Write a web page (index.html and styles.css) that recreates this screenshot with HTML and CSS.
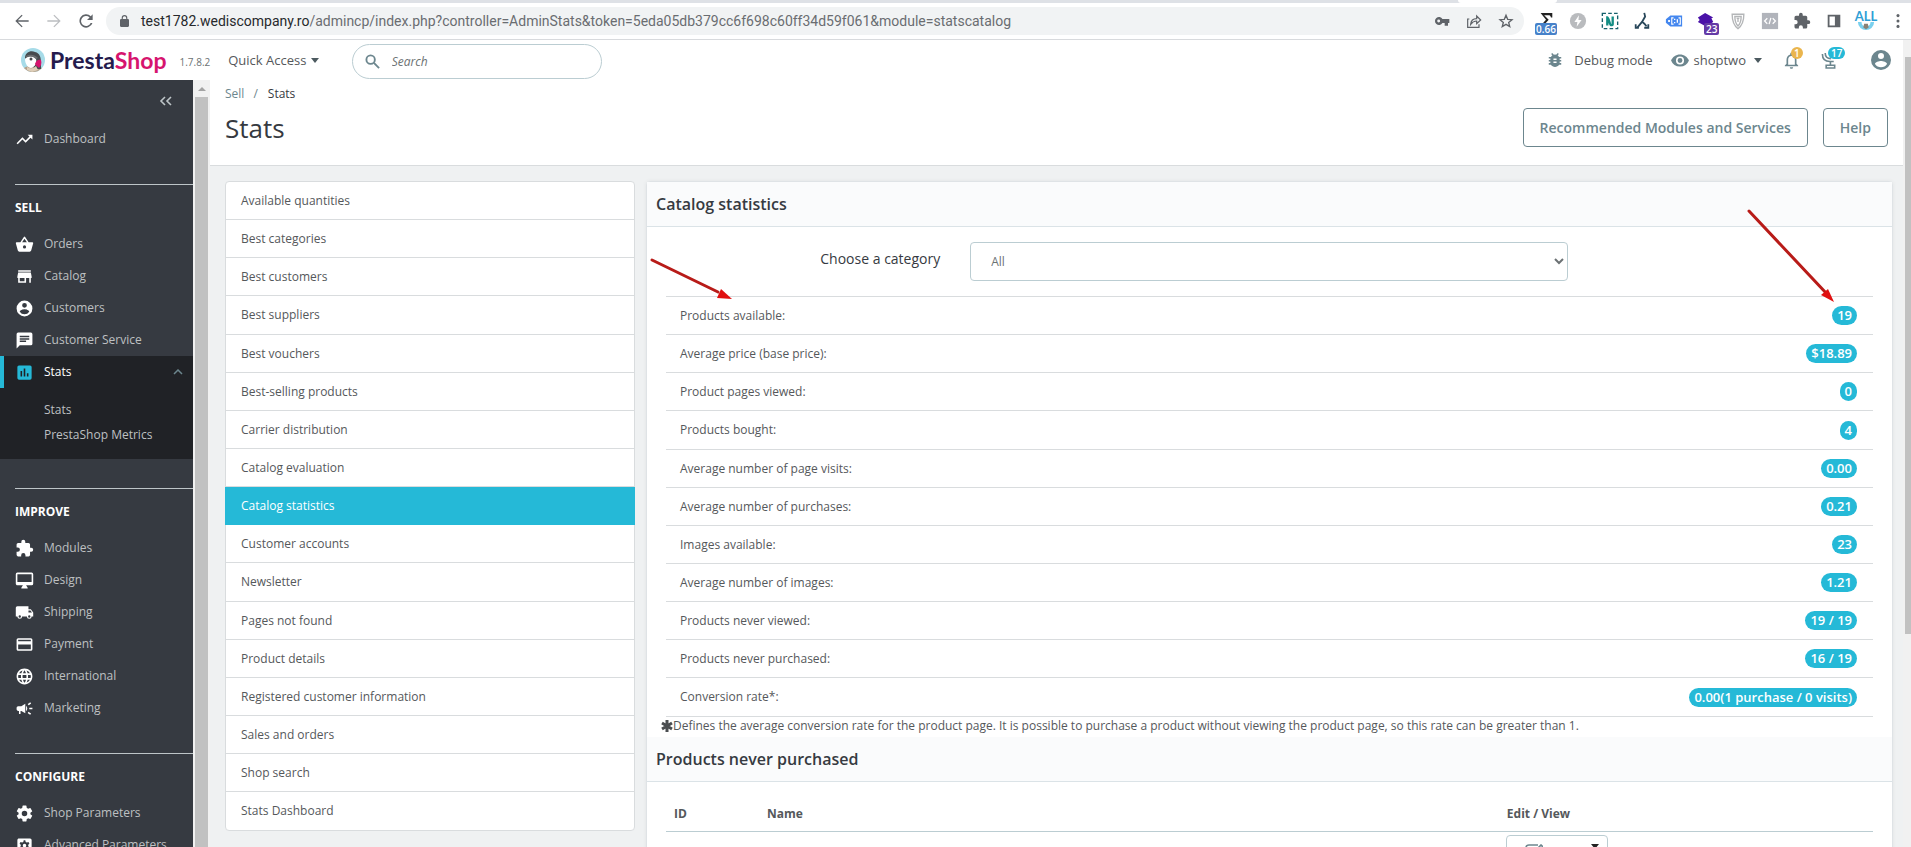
FILE: index.html
```html
<!DOCTYPE html>
<html lang="en">
<head>
<meta charset="utf-8">
<title>Stats • PrestaShop</title>
<link rel="stylesheet" href="styles.css">
</head>
<body>
<div class="tabstrip"><span class="tabstrip-active"></span></div>
<div class="toolbar">
  <nav class="nav-buttons">
    <button aria-label="Back"><svg viewBox="0 0 24 24"><path fill="#5f6368" d="M22 11H5.8l7.1-7.1L11.500 2.500 2 12l9.500 9.500 1.400-1.400L5.800 13H22z"/></svg></button>
    <button aria-label="Forward"><svg viewBox="0 0 24 24"><path fill="#bcbec1" d="M2 11h16.200l-7.100-7.100 1.400-1.400L22 12l-9.500 9.500-1.400-1.400 7.100-7.100H2z"/></svg></button>
    <button aria-label="Reload"><svg viewBox="0 0 24 24"><path fill="#5f6368" d="M19.200 4.800A10 10 0 1 0 21.700 15h-2.700a7.500 7.500 0 1 1-1.600-8.300L13.500 10.500H22V2z"/></svg></button>
  </nav>
  <div class="address">
    <svg class="lock" viewBox="4 1 16 21"><path fill="#5f6368" d="M18 8h-1V6A5 5 0 0 0 7 6v2H6a2 2 0 0 0-2 2v10c0 1.100.9 2 2 2h12a2 2 0 0 0 2-2V10a2 2 0 0 0-2-2zM9 6a3 3 0 0 1 6 0v2H9z"/></svg>
    <span class="url"><b>test1782.wediscompany.ro</b>/admincp/index.php?controller=AdminStats&amp;token=5eda05db379cc6f698c60ff34d59f061&amp;module=statscatalog</span>
    <div class="address-actions">
      <svg viewBox="0 0 24 24"><path fill="#5f6368" d="M12.650 9A6 6 0 1 0 12.650 15H16v4h5v-4h2V9zM7 14.200a2.200 2.200 0 1 1 0-4.400 2.200 2.200 0 0 1 0 4.400z"/></svg>
      <svg viewBox="0 0 24 24" fill="none" stroke="#5f6368" stroke-width="1.800"><path d="M5 9H2.500v12.500h17V17M7 17c.5-5.500 3.500-8.500 9-8.500V4.500l6 6-6 5.500v-4c-4 0-6.500 1.500-9 5z"/></svg>
      <svg viewBox="0 0 24 24" fill="none" stroke="#5f6368" stroke-width="2"><path d="M12 3.500l2.500 6 6.500.5-5 4.200 1.600 6.300-5.600-3.400-5.600 3.400L8 14.200 3 10l6.500-.5z"/></svg>
    </div>
  </div>
  <div class="extensions">
    <span class="ext"><svg viewBox="0 0 20 20"><path fill="#222" d="M4 1h13v5h-1.500C15 4 14.500 3.500 12.500 3.500H8l5 5L9 13H6l4-4.500z"/></svg><i class="ext-badge blue">0.66</i></span>
    <span class="ext"><svg viewBox="0 0 20 20"><circle cx="10" cy="10" r="9" fill="#b9bbbe"/><path fill="#fff" d="M11 3.500L6 11h3.300L8.500 16.500 14 9h-3.500z"/></svg></span>
    <span class="ext"><svg viewBox="0 0 20 20" fill="none"><path d="M1.500 1.500h17v17h-17z" stroke="#15606c" stroke-width="1.500" stroke-dasharray="4 2.500"/><path d="M7 15V6c1.500 0 2.500 8 4 8.500 1.200.4 2 0 2-1V5" stroke="#138d84" stroke-width="2.600"/></svg></span>
    <span class="ext"><svg viewBox="0 0 20 20" fill="none" stroke="#28475a" stroke-width="2"><path d="M12.500 1l1 4-3.500 6-5 6M10 10.500c1.500 2 3 2 5 5.500" /><path d="M3 13.500v4h3.500M12.500 17.500H17v-4" /></svg></span>
    <span class="ext"><svg viewBox="0 0 20 20"><path fill="#4487ef" d="M6 4h13v12H6L1 12V8z"/><path fill="none" stroke="#fff" stroke-width="1.200" d="M9.500 6.500h-2v7h2M15 6.500h2v7h-2"/><path fill="#fff" d="M3.500 9h2v2h-2zM10 7.500h1.500V9H10zM10 11h1.500v1.500H10zM13 8v4h1.500V8z"/></svg></span>
    <span class="ext"><svg viewBox="0 0 20 20"><path fill="#4a12a8" d="M9 1l9 5-2 1 2 4-8 5-9-5 2-2-2-3z"/></svg><i class="ext-badge violet">23</i></span>
    <span class="ext"><svg viewBox="0 0 20 20" fill="none" stroke="#b4b6b8" stroke-width="1.500"><path d="M3.500 2.500h13c0 7-1 12-6.500 16-5.500-4-6.500-9-6.500-16z"/><path d="M6.500 5h7c0 5-.5 7.500-3.500 10.500C7 12.500 6.500 10 6.500 5zM8.500 7h3M10 7v4"/></svg></span>
    <span class="ext"><svg viewBox="0 0 20 20"><path fill="#b1b4bb" d="M1 1h18v18H1z"/><path fill="none" stroke="#fff" stroke-width="1.400" d="M7 7l-3 3 3 3M13 7l3 3-3 3M11 6.500l-2 7"/></svg></span>
    <span class="ext"><svg viewBox="0 0 24 24"><use href="#i-puzzle" fill="#5f6368"/></svg></span>
    <span class="ext"><svg viewBox="0 0 20 20"><path fill="#5f6368" d="M3 3h14v14H3zm2 2v10h6V5z" fill-rule="evenodd"/></svg></span>
    <span class="ext profile"><svg viewBox="0 0 20 20"><path fill="none" stroke="#7ad0ee" stroke-width="4" d="M3 10c0 9 14 9 14 0"/><path fill="#8a8175" d="M8 12h4l1 4-3 2-3-2z"/></svg><i>ALL</i></span>
    <span class="ext"><svg viewBox="0 0 20 20" fill="#5f6368"><circle cx="10" cy="4" r="1.700"/><circle cx="10" cy="10" r="1.700"/><circle cx="10" cy="16" r="1.700"/></svg></span>
  </div>
</div>

<svg class="sprite" aria-hidden="true">
  <symbol id="i-trend" viewBox="0 0 24 24"><path d="M16 6l2.290 2.290-4.880 4.880-4-4L2 16.590 3.410 18l6-6 4 4 6.300-6.290L22 12V6z"/></symbol>
  <symbol id="i-basket" viewBox="0 0 24 24"><path d="M17.210 9l-4.380-6.560a1 1 0 0 0-1.660 0L6.790 9H2c-.55 0-1 .45-1 1l.04.27 2.540 9.270A2 2 0 0 0 5.500 21h13a2 2 0 0 0 1.930-1.460l2.540-9.270L23 10c0-.55-.45-1-1-1zM9 9l3-4.400L15 9zm3 8a2 2 0 1 1 0-4 2 2 0 0 1 0 4z"/></symbol>
  <symbol id="i-store" viewBox="0 0 24 24"><path d="M20 4H4v2h16zm1 10v-2l-1-5H4l-1 5v2h1v6h10v-6h4v6h2v-6zm-9 4H6v-4h6z"/></symbol>
  <symbol id="i-account" viewBox="0 0 24 24"><path d="M12 2a10 10 0 1 0 0 20 10 10 0 0 0 0-20zm0 3a3 3 0 1 1 0 6 3 3 0 0 1 0-6zm0 14.200a7.200 7.200 0 0 1-6-3.220c.03-1.990 4-3.080 6-3.080s5.970 1.090 6 3.080a7.200 7.200 0 0 1-6 3.220z"/></symbol>
  <symbol id="i-chat" viewBox="0 0 24 24"><path d="M20 2H4a2 2 0 0 0-2 2v18l4-4h14a2 2 0 0 0 2-2V4a2 2 0 0 0-2-2zM6 9h12v2H6zm8 5H6v-2h8zm4-6H6V6h12z"/></symbol>
  <symbol id="i-chart" viewBox="0 0 24 24"><path d="M19 3H5a2 2 0 0 0-2 2v14c0 1.100.9 2 2 2h14a2 2 0 0 0 2-2V5a2 2 0 0 0-2-2zM9 17H7v-7h2zm4 0h-2V7h2zm4 0h-2v-4h2z"/></symbol>
  <symbol id="i-puzzle" viewBox="0 0 24 24"><path d="M20.500 11H19V7a2 2 0 0 0-2-2h-4V3.500a2.500 2.500 0 0 0-5 0V5H4a2 2 0 0 0-2 2v3.800h1.500a2.700 2.700 0 0 1 0 5.400H2V20c0 1.100.9 2 2 2h3.800v-1.500a2.700 2.700 0 0 1 5.400 0V22H17a2 2 0 0 0 2-2v-4h1.500a2.500 2.500 0 0 0 0-5z"/></symbol>
  <symbol id="i-desktop" viewBox="0 0 24 24"><path d="M21 2H3a2 2 0 0 0-2 2v12c0 1.100.9 2 2 2h7l-2 3v1h8v-1l-2-3h7a2 2 0 0 0 2-2V4a2 2 0 0 0-2-2zm0 12H3V4h18z"/></symbol>
  <symbol id="i-truck" viewBox="0 0 24 24"><path d="M20 8h-3V4H3a2 2 0 0 0-2 2v11h2a3 3 0 0 0 6 0h6a3 3 0 0 0 6 0h2v-5zM6 18.500a1.500 1.500 0 1 1 0-3 1.500 1.500 0 0 1 0 3zm13.500-9l1.960 2.500H17V9.500zm-1.500 9a1.500 1.500 0 1 1 0-3 1.500 1.500 0 0 1 0 3z"/></symbol>
  <symbol id="i-card" viewBox="0 0 24 24"><path d="M20 4H4a2 2 0 0 0-2 2v12c0 1.100.9 2 2 2h16a2 2 0 0 0 2-2V6a2 2 0 0 0-2-2zm0 14H4v-6h16zm0-10H4V6h16z"/></symbol>
  <symbol id="i-globe" viewBox="0 0 24 24"><path d="M11.990 2C6.470 2 2 6.480 2 12s4.470 10 9.990 10C17.520 22 22 17.520 22 12S17.520 2 11.990 2zm6.930 6h-2.950a15.650 15.650 0 0 0-1.380-3.560A8.030 8.030 0 0 1 18.920 8zM12 4.040c.83 1.200 1.480 2.530 1.910 3.960h-3.820c.43-1.430 1.080-2.760 1.910-3.960zM4.260 14a8 8 0 0 1 0-4h3.380a16.500 16.500 0 0 0 0 4zm.82 2h2.950c.32 1.250.78 2.450 1.380 3.560A7.990 7.990 0 0 1 5.080 16zm2.950-8H5.080a7.990 7.990 0 0 1 4.330-3.560A15.650 15.650 0 0 0 8.030 8zM12 19.960A14 14 0 0 1 10.090 16h3.820A14 14 0 0 1 12 19.960zM14.340 14H9.660a14.700 14.700 0 0 1 0-4h4.680a14.700 14.700 0 0 1 0 4zm.25 5.560c.6-1.110 1.060-2.310 1.380-3.560h2.950a8.030 8.030 0 0 1-4.330 3.560zM16.360 14a16.500 16.500 0 0 0 0-4h3.380a8 8 0 0 1 0 4z"/></symbol>
  <symbol id="i-campaign" viewBox="0 0 24 24"><path d="M18 11v2h4v-2zm-2 6.610c.96.71 2.210 1.650 3.200 2.390l1.200-1.600c-.99-.74-2.240-1.680-3.200-2.400zM20.400 5.600L19.200 4c-.99.74-2.240 1.680-3.200 2.400l1.200 1.600c.96-.72 2.210-1.650 3.200-2.400zM4 9a2 2 0 0 0-2 2v2c0 1.100.9 2 2 2h1v4h2v-4h1l5 3V6L8 9zm11.500 3a4.500 4.500 0 0 0-1.500-3.350v6.690A4.500 4.500 0 0 0 15.500 12z"/></symbol>
  <symbol id="i-gear" viewBox="0 0 24 24"><path d="M19.430 12.980a7.800 7.800 0 0 0 0-1.960l2.110-1.650a.5.5 0 0 0 .12-.64l-2-3.460a.5.5 0 0 0-.61-.22l-2.490 1a7.300 7.300 0 0 0-1.690-.98l-.38-2.650A.49.49 0 0 0 14 2h-4a.49.49 0 0 0-.49.42l-.38 2.650c-.61.25-1.170.59-1.690.98l-2.490-1a.5.5 0 0 0-.61.22l-2 3.460a.5.5 0 0 0 .12.64l2.110 1.650a7.800 7.800 0 0 0 0 1.960l-2.110 1.650a.5.5 0 0 0-.12.64l2 3.460c.12.220.39.300.61.220l2.490-1c.52.400 1.080.730 1.690.980l.38 2.650c.03.240.24.420.49.420h4c.25 0 .46-.18.49-.42l.38-2.650a7.300 7.300 0 0 0 1.690-.98l2.490 1c.23.090.49 0 .61-.22l2-3.460a.5.5 0 0 0-.12-.64zM12 15.500a3.500 3.500 0 1 1 0-7 3.500 3.500 0 0 1 0 7z"/></symbol>
  <symbol id="i-app" viewBox="0 0 24 24"><path fill-rule="evenodd" d="M5 3h14a2 2 0 0 1 2 2v14a2 2 0 0 1-2 2H5a2 2 0 0 1-2-2V5c0-1.100.9-2 2-2zm6 2.500l-.5 2-1.500.8-2-.6-1.200 2L7.300 11v2l-1.500 1.300 1.200 2 2-.6 1.500.8.500 2h2l.5-2 1.500-.8 2 .6 1.200-2-1.500-1.300v-2l1.500-1.300-1.200-2-2 .6-1.500-.8-.5-2zm1 4.300a2.200 2.200 0 1 1 0 4.400 2.200 2.200 0 0 1 0-4.400z"/></symbol>
</svg>

<header class="topbar">
  <a class="brand" href="#">
    <svg class="brand-mark" viewBox="0 0 24 24"><defs><clipPath id="mark"><circle cx="12" cy="12" r="12"/></clipPath></defs><g clip-path="url(#mark)"><path fill="#a6dbe8" d="M0 0h24v24H0z"/><path fill="#b5a08a" d="M3 20c4-3 14-3 18 0v4H3z"/><path fill="#474b4e" d="M4 10c0-6 6-8 10-6 5 1 6 6 6 10v7h-6z"/><path fill="#fff" d="M4 11c3-3 8-4 11 0 1 4-1 8-5 9-3 0-6-4-6-9z"/><path fill="#6b6e70" d="M5 8c4-2 8-2 12 2l-2 1C12 8 8 8 5 9z"/><circle cx="10" cy="11" r="1.500" fill="#474b4e"/><path fill="#d6146e" d="M14 16c1-4 4-5 6-4 1 3 0 6-2 8-2-2-3-2-4-4z"/><path fill="#deceb8" d="M6 19c3 2 6 2 9-1l2 4-6 2-5-2z"/></g></svg>
    <span class="brand-name">Presta<em>Shop</em></span>
  </a>
  <span class="version">1.7.8.2</span>
  <button class="quick">Quick Access <i class="caret"></i></button>
  <label class="search">
    <svg viewBox="0 0 16 16" fill="none" stroke="#6c868e" stroke-width="2"><circle cx="6" cy="6" r="4.500"/><path d="M9.500 9.500l5.500 5.500"/></svg>
    <input type="search" placeholder="Search" aria-label="Search">
  </label>
  <div class="tools">
    <a class="debug" href="#"><svg viewBox="3 3 18 18"><path fill="#6c868e" d="M20 8h-2.810a6 6 0 0 0-1.820-1.960L17 4.410 15.590 3l-2.170 2.170a6 6 0 0 0-2.830 0L8.410 3 7 4.410l1.620 1.630A6 6 0 0 0 6.810 8H4v2h2.090L6 11v1H4v2h2v1l.09 1H4v2h2.810a6 6 0 0 0 10.380 0H20v-2h-2.090l.09-1v-1h2v-2h-2v-1l-.09-1H20zm-6 8h-4v-2h4zm0-4h-4v-2h4z"/></svg>Debug mode</a>
    <button class="shop"><svg viewBox="1 4 22 16"><path fill="#6c868e" d="M12 4.500C7 4.500 2.730 7.610 1 12a11.830 11.830 0 0 0 22 0C21.270 7.610 17 4.500 12 4.500zM12 17a5 5 0 1 1 0-10 5 5 0 0 1 0 10zm0-8a3 3 0 1 0 0 6 3 3 0 0 0 0-6z"/></svg>shoptwo <i class="caret"></i></button>
    <button class="notify bell" aria-label="Notifications"><svg viewBox="3 2 18 20"><path fill="#6c868e" d="M12 22a2 2 0 0 0 2-2h-4c0 1.100.9 2 2 2zm6-6v-5c0-3.070-1.630-5.640-4.500-6.320V4a1.500 1.500 0 0 0-3 0v.68C7.640 5.360 6 7.920 6 11v5l-2 2v1h16v-1zm-2 1H8v-6c0-2.480 1.510-4.500 4-4.500s4 2.020 4 4.500z"/></svg><span class="count orange">1</span></button>
    <button class="notify trophy" aria-label="Achievements"><svg viewBox="0 0 16 18" fill="none" stroke="#6c868e" stroke-width="1.700"><path d="M1 2c0 5 3 8 8 8h4M4 1c0 4 2 6 6 6M9.500 10v4M5 14h9v3H5z"/></svg><span class="count teal">17</span></button>
    <button class="user" aria-label="Account"><svg viewBox="2 2 20 20" fill="#6c868e"><use href="#i-account" width="24" height="24"/></svg></button>
  </div>
</header>

<div class="body">
  <aside class="sidebar">
    <button class="collapse" aria-label="Collapse menu"><svg viewBox="0 0 14 10" fill="none" stroke="#bec5c8" stroke-width="1.600"><path d="M6 1L2 5l4 4M12 1L8 5l4 4"/></svg></button>
    <ul class="menu"><li><a href="#"><svg><use href="#i-trend"/></svg>Dashboard</a></li></ul>
    <section class="group">
      <h2>SELL</h2>
      <ul class="menu">
        <li><a href="#"><svg><use href="#i-basket"/></svg>Orders</a></li>
        <li><a href="#"><svg><use href="#i-store"/></svg>Catalog</a></li>
        <li><a href="#"><svg><use href="#i-account"/></svg>Customers</a></li>
        <li><a href="#"><svg><use href="#i-chat"/></svg>Customer Service</a></li>
        <li class="open"><a href="#"><svg><use href="#i-chart"/></svg>Stats<svg class="chevron" viewBox="0 0 10 6" fill="none" stroke="#6c868e" stroke-width="1.500"><path d="M1 5l4-4 4 4"/></svg></a>
          <ul class="submenu"><li><a href="#">Stats</a></li><li><a href="#">PrestaShop Metrics</a></li></ul>
        </li>
      </ul>
    </section>
    <section class="group">
      <h2>IMPROVE</h2>
      <ul class="menu">
        <li><a href="#"><svg><use href="#i-puzzle"/></svg>Modules</a></li>
        <li><a href="#"><svg><use href="#i-desktop"/></svg>Design</a></li>
        <li><a href="#"><svg><use href="#i-truck"/></svg>Shipping</a></li>
        <li><a href="#"><svg><use href="#i-card"/></svg>Payment</a></li>
        <li><a href="#"><svg><use href="#i-globe"/></svg>International</a></li>
        <li><a href="#"><svg><use href="#i-campaign"/></svg>Marketing</a></li>
      </ul>
    </section>
    <section class="group">
      <h2>CONFIGURE</h2>
      <ul class="menu">
        <li><a href="#"><svg><use href="#i-gear"/></svg>Shop Parameters</a></li>
        <li><a href="#"><svg><use href="#i-app"/></svg>Advanced Parameters</a></li>
      </ul>
    </section>
  </aside>
  <div class="side-scroll"><i class="up"></i><span></span></div>

  <main class="main">
    <div class="page-head">
      <nav class="crumbs"><a href="#">Sell</a><span>/</span><b>Stats</b></nav>
      <div class="page-title">
        <h1>Stats</h1>
        <div class="actions"><button>Recommended Modules and Services</button><button>Help</button></div>
      </div>
    </div>
    <div class="content">
      <nav class="stat-list">
        <a href="#">Available quantities</a>
        <a href="#">Best categories</a>
        <a href="#">Best customers</a>
        <a href="#">Best suppliers</a>
        <a href="#">Best vouchers</a>
        <a href="#">Best-selling products</a>
        <a href="#">Carrier distribution</a>
        <a href="#">Catalog evaluation</a>
        <a href="#" class="active">Catalog statistics</a>
        <a href="#">Customer accounts</a>
        <a href="#">Newsletter</a>
        <a href="#">Pages not found</a>
        <a href="#">Product details</a>
        <a href="#">Registered customer information</a>
        <a href="#">Sales and orders</a>
        <a href="#">Shop search</a>
        <a href="#">Stats Dashboard</a>
      </nav>
      <section class="panel">
        <h3>Catalog statistics</h3>
        <form class="filter">
          <label for="category">Choose a category</label>
          <select id="category"><option>All</option></select>
        </form>
        <table class="metrics">
          <tbody>
          <tr><th scope="row">Products available:</th><td><span class="badge">19</span></td></tr>
          <tr><th scope="row">Average price (base price):</th><td><span class="badge">$18.89</span></td></tr>
          <tr><th scope="row">Product pages viewed:</th><td><span class="badge">0</span></td></tr>
          <tr><th scope="row">Products bought:</th><td><span class="badge">4</span></td></tr>
          <tr><th scope="row">Average number of page visits:</th><td><span class="badge">0.00</span></td></tr>
          <tr><th scope="row">Average number of purchases:</th><td><span class="badge">0.21</span></td></tr>
          <tr><th scope="row">Images available:</th><td><span class="badge">23</span></td></tr>
          <tr><th scope="row">Average number of images:</th><td><span class="badge">1.21</span></td></tr>
          <tr><th scope="row">Products never viewed:</th><td><span class="badge">19 / 19</span></td></tr>
          <tr><th scope="row">Products never purchased:</th><td><span class="badge">16 / 19</span></td></tr>
          <tr><th scope="row">Conversion rate*:</th><td><span class="badge">0.00(1 purchase / 0 visits)</span></td></tr>
          </tbody>
        </table>
        <p class="note"><svg viewBox="0 0 12 12" stroke="#4a4d50" stroke-width="3"><path d="M6 0v12M1 3l10 6M11 3L1 9"/></svg>Defines the average conversion rate for the product page. It is possible to purchase a product without viewing the product page, so this rate can be greater than 1.</p>
        <h3>Products never purchased</h3>
        <table class="products">
          <thead><tr><th class="col-id">ID</th><th>Name</th><th class="col-edit">Edit / View</th></tr></thead>
          <tbody><tr><td></td><td></td><td><button class="edit" aria-label="Edit"><svg viewBox="0 0 18 18" fill="none" stroke="#6c868e" stroke-width="1.600"><path d="M13 1H4a3 3 0 0 0-3 3v10a3 3 0 0 0 3 3h9a3 3 0 0 0 3-3v-3M8 11l1-3 7-7 2 2-7 7z"/></svg><i class="caret"></i></button></td></tr></tbody>
        </table>
        <svg class="arrow arrow-left" viewBox="0 0 88 46"><path stroke="#b81b18" stroke-width="3" stroke-linecap="round" d="M4 3l66 32"/><path fill="#e01010" d="M84 42l-15-1 4-9z"/></svg>
        <svg class="arrow arrow-right" viewBox="0 0 92 98"><path stroke="#b81b18" stroke-width="3" stroke-linecap="round" d="M3 3l78 83"/><path fill="#e01010" d="M88 94l-13-7 7-6z"/></svg>
      </section>
    </div>
  </main>
  <div class="page-scroll"><span></span></div>
</div>
</body>
</html>
```
FILE: styles.css
```css
* { box-sizing: border-box; }
html, body { height: 100%; margin: 0; }
body {
  display: flex;
  flex-direction: column;
  overflow: hidden;
  background: #fff;
  color: #55585b;
  font: 12px/18px "Open Sans", "Noto Sans", sans-serif;
}
button { padding: 0; border: 0; background: none; color: inherit; font: inherit; }
a { color: inherit; text-decoration: none; }
ul { margin: 0; padding: 0; list-style: none; }
i, em { font-style: normal; }
svg { display: block; flex: none; }
.sprite { position: absolute; width: 0; height: 0; }

/* Browser chrome */
.tabstrip { display: flex; justify-content: flex-end; flex: none; height: 3px; padding-right: 354px; background: #dee1e6; }
.tabstrip-active { width: 99px; background: #fff; border-radius: 0 0 3px 3px; }
.toolbar { display: flex; align-items: center; flex: none; height: 37px; border-bottom: 1px solid #d8dadd; }
.nav-buttons { display: flex; gap: 16px; padding: 0 14px; }
.nav-buttons svg { width: 16px; height: 16px; }
.address { display: flex; align-items: center; flex: 1; height: 28px; margin-left: -2px; padding: 0 10px 0 14px; border-radius: 14px; background: #f1f3f4; }
.lock { width: 9px; height: 12px; }
.url { margin-left: 12px; color: #6a6d71; font-family: Roboto, sans-serif; font-size: 14px; white-space: nowrap; }
.url b { color: #27292c; font-weight: 400; }
.address-actions { display: flex; gap: 16px; margin-left: auto; }
.address-actions svg { width: 16px; height: 16px; }
.extensions { display: flex; margin-left: 6px; margin-right: -3px; }
.ext { position: relative; display: flex; justify-content: center; width: 32px; }
.ext svg { width: 18px; height: 18px; }
.ext-badge { position: absolute; top: 11px; padding: 0 1px; border-radius: 2px; color: #fff; font: 600 10px/12px "Open Sans", sans-serif; }
.blue { background: #4681c9; }
.violet { left: 14px; padding: 0 2px; background: #643aa6; }
.profile svg { margin-top: 1px; }
.profile i { position: absolute; top: -4px; color: #2f9fd6; font: 700 13px/16px Lato, sans-serif; }

/* Application header */
.topbar { display: flex; align-items: center; flex: none; height: 40px; padding: 0 20px 0 21px; }
.brand { display: flex; align-items: center; gap: 5px; }
.brand-mark { width: 24px; height: 24px; }
.brand-name { color: #251b4d; font: 700 23px/24px Lato, sans-serif; }
.brand-name em { color: #d6146e; }
.version { margin: 3px 0 0 13px; color: #6c7274; font-size: 10px; }
.quick { margin-left: 18px; font-size: 13px; }
.caret { display: inline-block; margin-left: 1px; border: 4px solid transparent; border-top: 5px solid #4c5a60; border-bottom: 0; vertical-align: 2px; }
.search { display: flex; align-items: center; gap: 12px; width: 250px; height: 35px; margin: 3px 0 0 33px; padding: 0 12px; border: 1px solid #bbcdd2; border-radius: 18px; }
.search svg { width: 15px; height: 15px; }
.search input { flex: 1; min-width: 0; padding: 0; border: 0; outline: 0; background: none; color: inherit; font: italic 12px/18px "Open Sans", sans-serif; }
.search input::placeholder { color: #6c7274; }
.tools { display: flex; align-items: center; margin-left: auto; font-size: 13px; }
.debug, .shop { display: flex; align-items: center; }
.debug svg { width: 14px; height: 14px; margin-right: 12px; }
.shop { margin-left: 18px; }
.shop svg { width: 18px; height: 13px; margin-right: 5px; }
.shop .caret { margin-left: 8px; }
.notify { position: relative; }
.bell { margin-left: 22px; }
.bell svg { width: 15px; height: 17px; }
.trophy { margin-left: 22px; }
.trophy svg { width: 16px; height: 17px; }
.count { position: absolute; top: -5px; left: 7px; padding: 0 3px; border-radius: 6px; color: #fff; font-size: 10px; font-weight: 600; line-height: 12px; }
.orange { background: #eab54d; }
.teal { background: #25b9d7; }
.user { margin-left: 34px; }
.user svg { width: 20px; height: 20px; }

/* Sidebar */
.body { display: flex; flex: 1; min-height: 0; }
.sidebar { flex: none; width: 193px; overflow: hidden; background: #363a41; color: #bec0c2; }
.collapse { display: block; margin: 16px 20px 17px auto; }
.collapse svg { width: 14px; height: 10px; }
.menu a { display: flex; align-items: center; height: 32px; padding-left: 15px; font-size: 12px; }
.menu svg { width: 19px; height: 19px; margin-right: 10px; fill: #fff; }
.group { margin-top: 29px; }
.group h2 { margin: 0 0 0 15px; padding: 14px 0 11px; border-top: 1px solid #bec5c8; color: #fff; font-size: 12px; line-height: 18px; font-weight: 700; }
.menu .open { padding-bottom: 12px; background: #202226; }
.open > a { border-left: 4px solid #25b9d7; padding-left: 11px; color: #fff; }
.open > a svg { fill: #25b9d7; }
.menu .open .chevron { width: 10px; height: 6px; margin: 0 10px 0 auto; fill: none; }
.submenu { padding-top: 9px; }
.submenu a { height: 25px; padding-left: 44px; }
.side-scroll { display: flex; flex-direction: column; align-items: center; flex: none; width: 17px; background: #f1f1f1; }
.up { height: 17px; padding-top: 7px; }
.up::before { content: ""; display: block; border: 4px solid transparent; border-bottom-color: #a3a3a3; border-top: 0; }
.side-scroll span { flex: 1; width: 13px; background: #c1c1c1; }
.page-scroll { flex: none; display: flex; justify-content: flex-end; width: 8px; margin-top: -40px; background: #f1f1f1; padding-top: 17px; }
.page-scroll span { width: 6px; height: 73%; background: #c1c1c1; }

/* Page */
.main { flex: 1; min-width: 0; overflow: hidden; background: #eff1f2; }
.page-head { padding: 5px 15px 18px; border-bottom: 1px solid #d9dcde; background: #fff; }
.crumbs { display: flex; gap: 9px; color: #6c868e; }
.crumbs b { color: #363a41; font-weight: 400; margin-left: 1px; }
.page-title { display: flex; justify-content: space-between; align-items: center; margin-top: 5px; }
h1 { margin: 0; color: #363a41; font-size: 26px; line-height: 36px; font-weight: 400; }
.actions { display: flex; gap: 15px; }
.actions button { height: 39px; padding: 0 16px; border: 1px solid #6c868e; border-radius: 4px; color: #6c868e; font-size: 14px; font-weight: 600; }
.content { display: grid; grid-template-columns: minmax(260px, 410fr) 1247fr; gap: 11px; align-items: start; padding: 15px 10px 0 15px; }
.stat-list { display: flex; flex-direction: column; border: 1px solid #d9dcde; border-radius: 4px; background: #fff; }
.stat-list a { height: 38px; padding: 10px 15px 9px; border-bottom: 1px solid #d9dcde; }
.stat-list a:nth-child(7n+4) { height: 39px; }
.stat-list a:last-child { border-bottom: 0; }
.stat-list .active { margin: 0 -1px; padding-left: 16px; border-color: #25b9d7; background: #25b9d7; color: #fff; }
.panel { position: relative; border: 1px solid #dfe3e6; border-radius: 4px; background: #fff; box-shadow: 0 0 4px rgba(0, 0, 0, .06); }
h3 { margin: 0; padding: 10px 9px; border-bottom: 1px solid #dbe3e7; background: #fafbfc; color: #363a41; font-size: 16px; line-height: 24px; font-weight: 600; }
.filter { display: grid; grid-template-columns: 274fr 597fr 275fr; gap: 30px; margin: 0 19px; padding: 15px 0; }
.filter label { padding-top: 8px; text-align: right; color: #363a41; font-size: 14px; }
.filter select { height: 39px; padding: 0 16px; border: 1px solid #bbcdd2; border-radius: 4px; background: #fff; color: #6c7274; font: 12px/18px "Open Sans", sans-serif; }
.metrics { width: calc(100% - 38px); margin: 0 19px; border-collapse: collapse; border-bottom: 1px solid #d9dcde; }
.metrics tr { height: 38px; border-top: 1px solid #d9dcde; }
.metrics tr:nth-child(7n+4) { height: 39px; }
.metrics th { padding: 0 14px; text-align: left; font-weight: 400; }
.metrics td { padding: 0 16px; text-align: right; }
.badge { display: inline-block; padding: 0 5px; border-radius: 10px; background: #25b9d7; color: #fff; font-size: 13px; line-height: 19px; font-weight: 600; }
.note { display: flex; align-items: flex-start; height: 20px; margin: 0 14px; }
.note svg { width: 12px; height: 12px; margin-top: 3px; }
.products { width: calc(100% - 38px); margin: 15px 19px 0; border-collapse: collapse; table-layout: fixed; }
.products th { height: 34px; padding: 0 8px; border-bottom: 1px solid #bbcdd2; text-align: left; font-weight: 700; }
.products td { padding: 3px 7px; }
.col-id { width: 93px; }
.col-edit { width: 31%; }
.edit { display: flex; align-items: flex-start; justify-content: space-between; width: 102px; height: 38px; padding: 8px 8px 0 18px; border: 1px solid #bbcdd2; border-radius: 4px; }
.edit svg { width: 18px; height: 18px; }
.edit .caret { border-top-color: #222; }
.arrow { position: absolute; }
.arrow-left { top: 75px; left: 1px; width: 88px; height: 46px; }
.arrow-right { top: 26px; right: 54px; width: 92px; height: 98px; }
```
